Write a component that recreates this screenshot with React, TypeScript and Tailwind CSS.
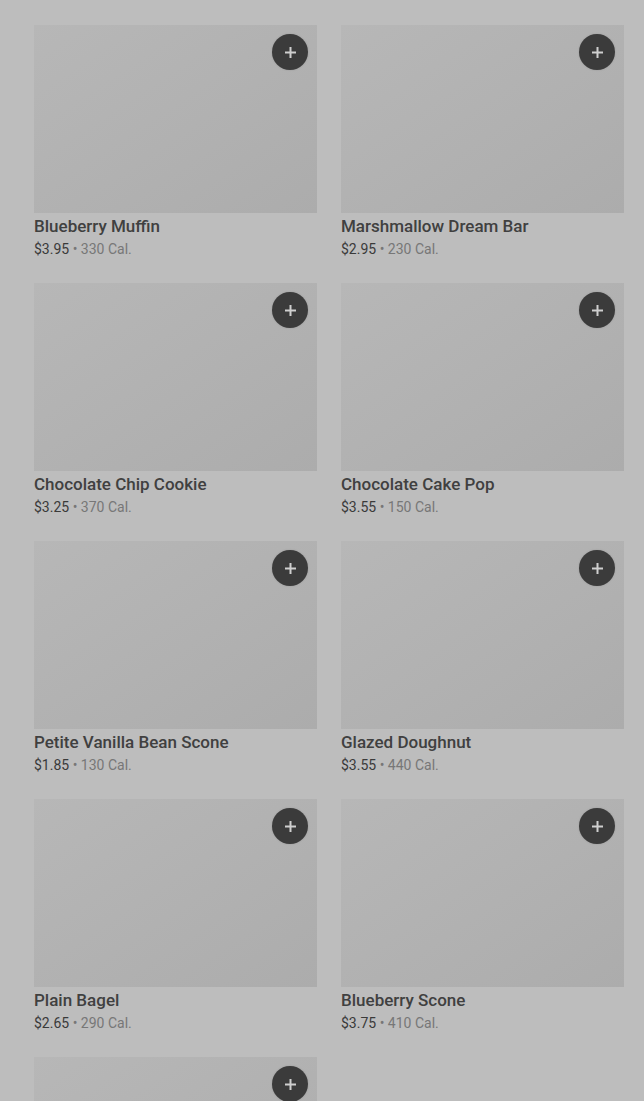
import React from "react";

type Item = { name: string; price: string; cal: string };

const items: Item[] = [
  { name: "Butter Croissant", price: "$3.45", cal: "260 Cal." },
  { name: "Cheese Danish", price: "$3.45", cal: "290 Cal." },
  { name: "Blueberry Muffin", price: "$3.95", cal: "330 Cal." },
  { name: "Marshmallow Dream Bar", price: "$2.95", cal: "230 Cal." },
  { name: "Chocolate Chip Cookie", price: "$3.25", cal: "370 Cal." },
  { name: "Chocolate Cake Pop", price: "$3.55", cal: "150 Cal." },
  { name: "Petite Vanilla Bean Scone", price: "$1.85", cal: "130 Cal." },
  { name: "Glazed Doughnut", price: "$3.55", cal: "440 Cal." },
  { name: "Plain Bagel", price: "$2.65", cal: "290 Cal." },
  { name: "Blueberry Scone", price: "$3.75", cal: "410 Cal." },
  { name: "Everything Bagel", price: "$2.65", cal: "290 Cal." },
];

const PlusButton = () => (
  <button className="absolute right-[9px] top-[9px] flex size-9 items-center justify-center rounded-full bg-[#3b3b3b] shadow-[0_0_2px_rgba(0,0,0,0.15)]">
    <svg width="13" height="13" viewBox="0 0 13 13" fill="none">
      <path d="M6.5 1v11M1 6.5h11" stroke="#cfcfcf" strokeWidth="2" />
    </svg>
  </button>
);

const Card = ({ item }: { item: Item }) => (
  <div className="flex flex-col">
    <div className="relative h-[188px] w-full bg-gradient-to-br from-[#b7b7b7] to-[#acacac]">
      <PlusButton />
    </div>
    <h3 className="mt-px text-[17px] font-medium leading-6 text-[#404040]">
      {item.name}
    </h3>
    <p className="mt-px text-sm leading-5">
      <span className="text-[#3a3a3a]">{item.price}</span>
      <span className="text-[#777777]"> • {item.cal}</span>
    </p>
  </div>
);

export default function App() {
  return (
    <div
      className="h-[1101px] w-[644px] overflow-hidden bg-[#bdbdbd]"
      style={{ fontFamily: "Roboto, 'Noto Sans', sans-serif" }}
    >
      <div className="-mt-[233px] grid grid-cols-[283px_283px] gap-x-6 gap-y-6 pl-[34px]">
        {items.map((item) => (
          <Card key={item.name} item={item} />
        ))}
      </div>
    </div>
  );
}
